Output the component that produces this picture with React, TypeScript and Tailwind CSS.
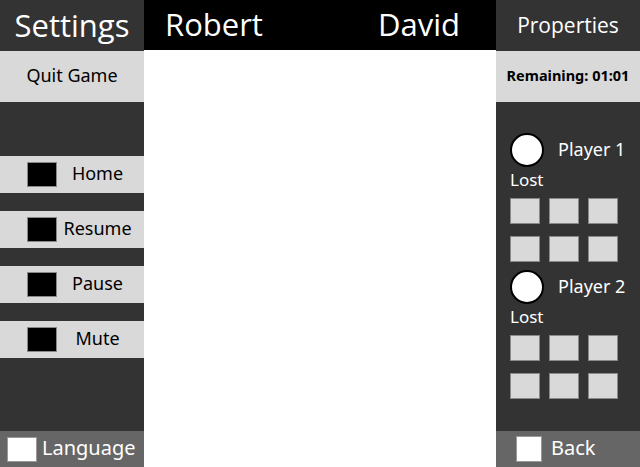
import React from "react";

const body = { fontFamily: '"Noto Sans", "DejaVu Sans", sans-serif' };

function MenuRow({ label }: { label: string }) {
  return (
    <div className="h-[37px] bg-[#d9d9d9] flex items-center">
      <div className="ml-[27px] w-[30px] h-[25px] bg-black border border-[#888] shrink-0" />
      <div className="flex-1 text-center pr-[6px] pb-[3px] text-[18px] text-black leading-none">{label}</div>
    </div>
  );
}

function PlayerBlock({ name }: { name: string }) {
  return (
    <div className="flex flex-col">
      <div className="flex items-center">
        <div className="w-[34px] h-[34px] rounded-full bg-white border-2 border-black" />
        <div className="ml-[14px] pb-[2px] text-white text-[18px] leading-none">{name}</div>
      </div>
      <div className="text-white text-[17px] leading-none mt-[3px] h-[20px] pb-[1px] flex items-center">Lost</div>
      <div className="grid grid-cols-[30px_30px_30px] gap-x-[9px] gap-y-[12px] mt-[8px]">
        {Array.from({ length: 6 }).map((_, i) => (
          <div key={i} className="w-[30px] h-[26px] bg-[#d9d9d9] border border-[#888]" />
        ))}
      </div>
    </div>
  );
}

export default function App() {
  return (
    <div className="w-[640px] h-[467px] flex overflow-hidden" style={body}>
      <div className="w-[144px] h-full bg-[#333333] flex flex-col">
        <div className="h-[51px] pb-[1px] flex items-center justify-center text-white text-[31px] leading-none" style={{ fontFamily: '"Open Sans", sans-serif' }}>
          Settings
        </div>
        <div className="h-[51px] bg-[#d9d9d9] pb-[3px] flex items-center justify-center text-[18px] text-black leading-none">Quit Game</div>
        <div className="mt-[54px] flex flex-col gap-[18px]">
          <MenuRow label="Home" />
          <MenuRow label="Resume" />
          <MenuRow label="Pause" />
          <MenuRow label="Mute" />
        </div>
        <div className="flex-1" />
        <div className="h-[36px] bg-[#666666] flex items-center">
          <div className="ml-[7px] w-[30px] h-[25px] bg-white border border-[#999]" />
          <div className="ml-[5px] pb-[3px] text-white text-[20px] leading-none">Language</div>
        </div>
      </div>
      <div className="flex-1 h-full bg-white flex flex-col">
        <div className="h-[50px] pb-[2px] bg-black flex items-center text-white text-[31px] leading-none" style={{ fontFamily: '"Open Sans", sans-serif' }}>
          <span className="ml-[21px]">Robert</span>
          <span className="ml-auto mr-[36px]">David</span>
        </div>
      </div>
      <div className="w-[144px] h-full bg-[#333333] flex flex-col">
        <div className="h-[51px] flex items-center justify-center text-white text-[21px] leading-none" style={{ fontFamily: '"Open Sans", sans-serif' }}>
          Properties
        </div>
        <div className="h-[51px] bg-[#d9d9d9] pb-[2px] flex items-center justify-center text-[14.5px] font-bold text-black leading-none">Remaining: 01:01</div>
        <div className="pl-[14px] pt-[31px] flex flex-col gap-[8px]">
          <PlayerBlock name="Player 1" />
          <PlayerBlock name="Player 2" />
        </div>
        <div className="flex-1" />
        <div className="h-[36px] bg-[#666666] flex items-center">
          <div className="ml-[20px] w-[26px] h-[26px] bg-white border border-[#999]" />
          <div className="ml-[9px] pb-[3px] text-white text-[20px] leading-none">Back</div>
        </div>
      </div>
    </div>
  );
}
